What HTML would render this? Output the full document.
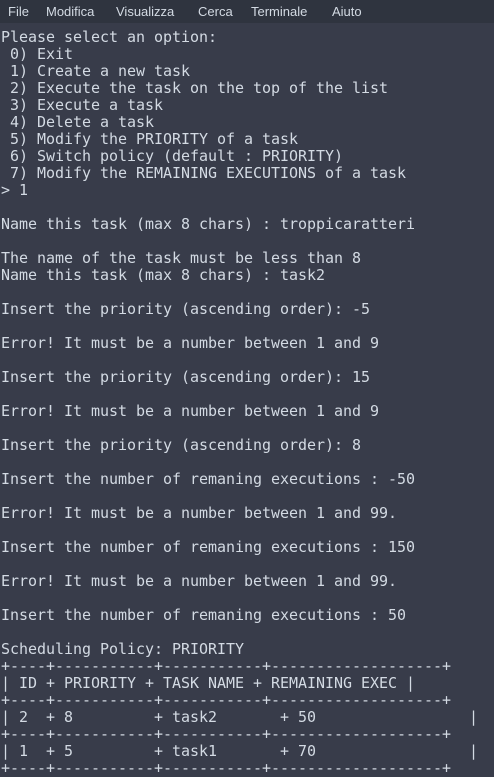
<!DOCTYPE html>
<html><head><style>
html,body{margin:0;padding:0;background:#383c4a;width:494px;height:768px;overflow:hidden}
.menu{position:absolute;top:0;left:0;width:494px;height:23px;background:#2f343f;font:13px "Liberation Sans",sans-serif;color:#d3dae3}
.menu span{position:absolute;top:4px}
pre{position:absolute;top:29px;left:1px;margin:0;font:15px/17px "DejaVu Sans Mono","Liberation Mono",monospace;color:#d3dae3;letter-spacing:-0.03px}
</style></head><body>
<div class="menu"><span style="left:8px">File</span><span style="left:46px">Modifica</span><span style="left:116px">Visualizza</span><span style="left:198px">Cerca</span><span style="left:251px">Terminale</span><span style="left:332px">Aiuto</span></div>
<pre>Please select an option:
 0) Exit
 1) Create a new task
 2) Execute the task on the top of the list
 3) Execute a task
 4) Delete a task
 5) Modify the PRIORITY of a task
 6) Switch policy (default : PRIORITY)
 7) Modify the REMAINING EXECUTIONS of a task
&gt; 1

Name this task (max 8 chars) : troppicaratteri

The name of the task must be less than 8
Name this task (max 8 chars) : task2

Insert the priority (ascending order): -5

Error! It must be a number between 1 and 9

Insert the priority (ascending order): 15

Error! It must be a number between 1 and 9

Insert the priority (ascending order): 8

Insert the number of remaning executions : -50

Error! It must be a number between 1 and 99.

Insert the number of remaning executions : 150

Error! It must be a number between 1 and 99.

Insert the number of remaning executions : 50

Scheduling Policy: PRIORITY
+----+-----------+-----------+-------------------+
| ID + PRIORITY + TASK NAME + REMAINING EXEC |
+----+-----------+-----------+-------------------+
| 2  + 8         + task2       + 50                 |
+----+-----------+-----------+-------------------+
| 1  + 5         + task1       + 70                 |
+----+-----------+-----------+-------------------+</pre>
</body></html>
